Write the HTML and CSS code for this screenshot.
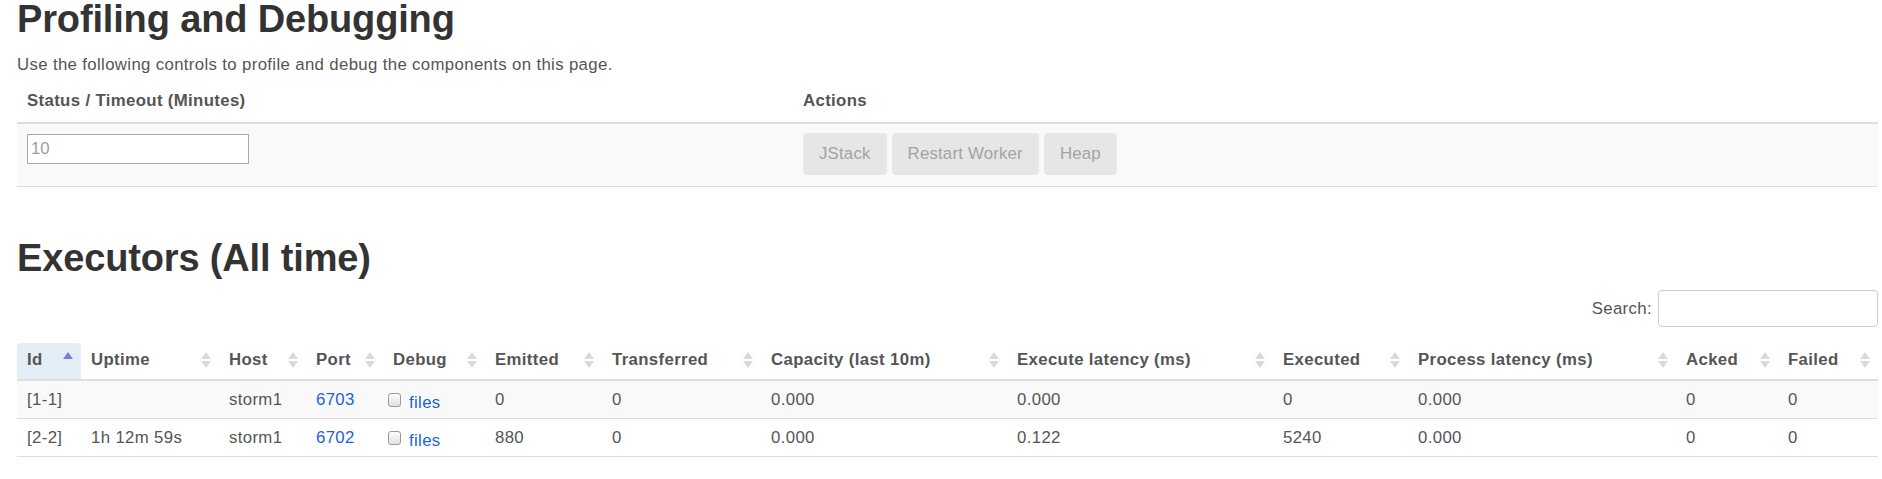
FILE: index.html
```html
<!DOCTYPE html>
<html>
<head>
<meta charset="utf-8">
<link rel="stylesheet" href="styles.css">
</head>
<body>
<div class="page">
  <h2 class="title">Profiling and Debugging</h2>
  <p class="lead">Use the following controls to profile and debug the components on this page.</p>
  <table class="prof">
    <colgroup><col class="p-status"><col class="p-actions"></colgroup>
    <thead>
      <tr><th>Status / Timeout (Minutes)</th><th>Actions</th></tr>
    </thead>
    <tbody>
      <tr>
        <td><input class="timeout" type="text" placeholder="10"></td>
        <td>
          <div class="btns">
            <button class="btn" disabled>JStack</button>
            <button class="btn" disabled>Restart Worker</button>
            <button class="btn" disabled>Heap</button>
          </div>
        </td>
      </tr>
    </tbody>
  </table>

  <h2 class="title exec-title">Executors (All time)</h2>
  <div class="search-row">
    <label class="search-label">Search:</label>
    <input class="search" type="search">
  </div>
  <table class="exec">
    <colgroup>
      <col class="w-id"><col class="w-up"><col class="w-host"><col class="w-port"><col class="w-debug"><col class="w-emit"><col class="w-trans"><col class="w-cap"><col class="w-elat"><col class="w-exec"><col class="w-plat"><col class="w-ack"><col class="w-fail">
    </colgroup>
    <thead>
      <tr>
        <th class="sorted"><div class="th-in"><span>Id</span><svg class="sort" width="10" height="18" viewBox="0 0 10 18"><path class="up-active" d="M5 1 L10 8 L0 8 Z"/></svg></div></th>
        <th><div class="th-in"><span>Uptime</span><svg class="sort" width="10" height="18" viewBox="0 0 10 18"><path d="M5 1 L10 8 L0 8 Z"/><path d="M0 10 L10 10 L5 17 Z"/></svg></div></th>
        <th><div class="th-in"><span>Host</span><svg class="sort" width="10" height="18" viewBox="0 0 10 18"><path d="M5 1 L10 8 L0 8 Z"/><path d="M0 10 L10 10 L5 17 Z"/></svg></div></th>
        <th><div class="th-in"><span>Port</span><svg class="sort" width="10" height="18" viewBox="0 0 10 18"><path d="M5 1 L10 8 L0 8 Z"/><path d="M0 10 L10 10 L5 17 Z"/></svg></div></th>
        <th><div class="th-in"><span>Debug</span><svg class="sort" width="10" height="18" viewBox="0 0 10 18"><path d="M5 1 L10 8 L0 8 Z"/><path d="M0 10 L10 10 L5 17 Z"/></svg></div></th>
        <th><div class="th-in"><span>Emitted</span><svg class="sort" width="10" height="18" viewBox="0 0 10 18"><path d="M5 1 L10 8 L0 8 Z"/><path d="M0 10 L10 10 L5 17 Z"/></svg></div></th>
        <th><div class="th-in"><span>Transferred</span><svg class="sort" width="10" height="18" viewBox="0 0 10 18"><path d="M5 1 L10 8 L0 8 Z"/><path d="M0 10 L10 10 L5 17 Z"/></svg></div></th>
        <th><div class="th-in"><span>Capacity (last 10m)</span><svg class="sort" width="10" height="18" viewBox="0 0 10 18"><path d="M5 1 L10 8 L0 8 Z"/><path d="M0 10 L10 10 L5 17 Z"/></svg></div></th>
        <th><div class="th-in"><span>Execute latency (ms)</span><svg class="sort" width="10" height="18" viewBox="0 0 10 18"><path d="M5 1 L10 8 L0 8 Z"/><path d="M0 10 L10 10 L5 17 Z"/></svg></div></th>
        <th><div class="th-in"><span>Executed</span><svg class="sort" width="10" height="18" viewBox="0 0 10 18"><path d="M5 1 L10 8 L0 8 Z"/><path d="M0 10 L10 10 L5 17 Z"/></svg></div></th>
        <th><div class="th-in"><span>Process latency (ms)</span><svg class="sort" width="10" height="18" viewBox="0 0 10 18"><path d="M5 1 L10 8 L0 8 Z"/><path d="M0 10 L10 10 L5 17 Z"/></svg></div></th>
        <th><div class="th-in"><span>Acked</span><svg class="sort" width="10" height="18" viewBox="0 0 10 18"><path d="M5 1 L10 8 L0 8 Z"/><path d="M0 10 L10 10 L5 17 Z"/></svg></div></th>
        <th><div class="th-in"><span>Failed</span><svg class="sort" width="10" height="18" viewBox="0 0 10 18"><path d="M5 1 L10 8 L0 8 Z"/><path d="M0 10 L10 10 L5 17 Z"/></svg></div></th>
      </tr>
    </thead>
    <tbody>
      <tr class="odd">
        <td>[1-1]</td><td></td><td>storm1</td><td><a href="#">6703</a></td>
        <td><input class="chk" type="checkbox"> <a class="files" href="#">files</a></td>
        <td>0</td><td>0</td><td>0.000</td><td>0.000</td><td>0</td><td>0.000</td><td>0</td><td>0</td>
      </tr>
      <tr>
        <td>[2-2]</td><td>1h 12m 59s</td><td>storm1</td><td><a href="#">6702</a></td>
        <td><input class="chk" type="checkbox"> <a class="files" href="#">files</a></td>
        <td>880</td><td>0</td><td>0.000</td><td>0.122</td><td>5240</td><td>0.000</td><td>0</td><td>0</td>
      </tr>
    </tbody>
  </table>
</div>
</body>
</html>
```

FILE: styles.css
```css
html, body {
  margin: 0;
  padding: 0;
  background: #fff;
}
body {
  font-family: "Liberation Sans", Arial, sans-serif;
  font-size: 16.8px;
  line-height: 24px;
  letter-spacing: 0.35px;
  color: #555;
}
.page {
  width: 1861px;
  padding-left: 17px;
}
.title {
  font-size: 38px;
  line-height: 39px;
  font-weight: bold;
  letter-spacing: -0.15px;
  color: #333;
  margin: 0 0 14px;
}
.exec-title {
  margin: 52px 0 12px;
}
.lead {
  margin: 0 0 2px;
}
table {
  width: 1861px;
  border-collapse: collapse;
  table-layout: fixed;
}
.p-status { width: 776px; }
.p-actions { width: 1085px; }
.prof th {
  text-align: left;
  font-weight: bold;
  padding: 10px 10px 9px;
  border-bottom: 2px solid #ddd;
}
.prof td {
  background: #f9f9f9;
  padding: 9px 10px 11px;
  border-bottom: 1px solid #ddd;
  vertical-align: top;
}
.timeout {
  display: block;
  box-sizing: border-box;
  width: 222px;
  height: 30px;
  margin: 1px 0 0;
  padding: 0 3px;
  border: 1px solid #a9a9a9;
  font-family: "Liberation Sans", Arial, sans-serif;
  font-size: 16.8px;
  color: #555;
  background: #fff;
}
.timeout::placeholder { color: #a0a0a0; }
.btns {
  display: flex;
  gap: 5px;
}
.btn {
  height: 42px;
  padding: 0 16px;
  border: 0;
  border-radius: 4px;
  background: #e6e6e6;
  color: #a3a3a3;
  font-family: "Liberation Sans", Arial, sans-serif;
  font-size: 16.8px;
  letter-spacing: 0.2px;
}
.search-row {
  display: flex;
  justify-content: flex-end;
  align-items: center;
  gap: 6px;
  margin-bottom: 16px;
}
.search-label { color: #555; }
.search {
  box-sizing: border-box;
  width: 220px;
  height: 37px;
  border: 1px solid #ccc;
  border-radius: 4px;
  margin: 0;
  font-size: 16.8px;
}
.w-id { width: 64px; }
.w-up { width: 138px; }
.w-host { width: 87px; }
.w-port { width: 77px; }
.w-debug { width: 102px; }
.w-emit { width: 117px; }
.w-trans { width: 159px; }
.w-cap { width: 246px; }
.w-elat { width: 266px; }
.w-exec { width: 135px; }
.w-plat { width: 268px; }
.w-ack { width: 102px; }
.w-fail { width: 100px; }
.exec th {
  text-align: left;
  font-weight: bold;
  padding: 5px 8px 7px 10px;
  border-bottom: 2px solid #ddd;
}
.exec th.sorted {
  background: #e3eef7;
  border-radius: 4px 4px 0 0;
}
.th-in {
  display: flex;
  justify-content: space-between;
  align-items: center;
}
.sort { flex: none; }
.sort path { fill: #d9d9d9; }
.sort path.up-active { fill: #7c7ce0; }
.exec td {
  padding: 7px 10px 6px;
  border-bottom: 1px solid #ddd;
  white-space: nowrap;
}
.exec tr.odd td { background: #f9f9f9; }
a {
  color: #1c63d4;
  text-decoration: none;
}
.chk {
  appearance: none;
  -webkit-appearance: none;
  box-sizing: border-box;
  width: 13px;
  height: 14px;
  margin: 0 3px 0 -5px;
  border: 1px solid #9a9a9a;
  border-radius: 3px;
  background: linear-gradient(#fdfdfd, #e2e2e2);
  vertical-align: -2px;
}
.files {
  position: relative;
  top: 3px;
}
```
